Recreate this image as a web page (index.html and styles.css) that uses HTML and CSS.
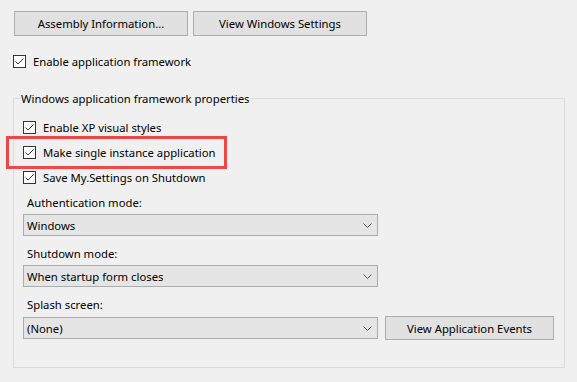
FILE: index.html
```html
<!DOCTYPE html>
<html lang="en">
<head>
  <meta charset="UTF-8">
  <title>Application settings</title>
  <link rel="stylesheet" href="styles.css">
</head>
<body>
  <div class="page">
    <div class="topButtons">
      <button class="winButton wide">Assembly Information...</button>
      <button class="winButton wide">View Windows Settings</button>
    </div>

    <label class="checkRow appFramework">
      <span class="box"><svg width="11" height="11" viewBox="0 0 11 11"><polyline points="1.5,5.5 4,8 9.5,2.5" fill="none" stroke="#333" stroke-width="1"/></svg></span>
      <span>Enable application framework</span>
    </label>

    <fieldset class="group">
      <legend>Windows application framework properties</legend>

      <div class="checkList">
        <label class="checkRow">
          <span class="box"><svg width="11" height="11" viewBox="0 0 11 11"><polyline points="1.5,5.5 4,8 9.5,2.5" fill="none" stroke="#333" stroke-width="1"/></svg></span>
          <span>Enable XP visual styles</span>
        </label>
        <label class="checkRow marked">
          <span class="box"><svg width="11" height="11" viewBox="0 0 11 11"><polyline points="1.5,5.5 4,8 9.5,2.5" fill="none" stroke="#333" stroke-width="1"/></svg></span>
          <span>Make single instance application</span>
        </label>
        <label class="checkRow">
          <span class="box"><svg width="11" height="11" viewBox="0 0 11 11"><polyline points="1.5,5.5 4,8 9.5,2.5" fill="none" stroke="#333" stroke-width="1"/></svg></span>
          <span>Save My.Settings on Shutdown</span>
        </label>
      </div>

      <div class="field">
        <div class="fieldLabel">Authentication mode:</div>
        <div class="combo">
          <span>Windows</span>
          <svg width="9" height="5" viewBox="0 0 9 5"><polyline points="0.5,0.5 4.5,4.5 8.5,0.5" fill="none" stroke="#555" stroke-width="1"/></svg>
        </div>
      </div>

      <div class="field">
        <div class="fieldLabel">Shutdown mode:</div>
        <div class="combo">
          <span>When startup form closes</span>
          <svg width="9" height="5" viewBox="0 0 9 5"><polyline points="0.5,0.5 4.5,4.5 8.5,0.5" fill="none" stroke="#555" stroke-width="1"/></svg>
        </div>
      </div>

      <div class="field">
        <div class="fieldLabel">Splash screen:</div>
        <div class="splashRow">
          <div class="combo">
            <span>(None)</span>
            <svg width="9" height="5" viewBox="0 0 9 5"><polyline points="0.5,0.5 4.5,4.5 8.5,0.5" fill="none" stroke="#555" stroke-width="1"/></svg>
          </div>
          <button class="winButton events">View Application Events</button>
        </div>
      </div>
    </fieldset>
  </div>
</body>
</html>
```

FILE: styles.css
```css
body {
  margin: 0;
  background: #f0f0f0;
  font-family: "Noto Sans", "Open Sans", sans-serif;
  font-size: 11.3px;
  color: #000;
}

.page {
  padding: 11px 0 0 13px;
}

/* top button row */
.topButtons {
  display: flex;
  gap: 5px;
  margin-left: 1px;
}

.winButton {
  height: 25px;
  background: #e1e1e1;
  border: 1px solid #adadad;
  font: inherit;
  color: #000;
  padding: 0;
}

.wide {
  width: 174px;
}

/* checkboxes */
.checkRow {
  display: flex;
  align-items: center;
  height: 17px;
  gap: 7px;
}

.box {
  width: 11px;
  height: 11px;
  border: 1px solid #333;
  background: #fff;
  display: flex;
}

.appFramework {
  margin-top: 17px;
}

/* group box */
.group {
  margin: 20px 0 0 0;
  width: 552px;
  box-sizing: border-box;
  border: 1px solid #dcdcdc;
  padding: 12px 9px 27px 9px;
}

.group legend {
  padding: 0 1px;
  margin-left: -3px;
  line-height: 17px;
}

.checkList {
  display: flex;
  flex-direction: column;
  gap: 8px;
  align-items: flex-start;
}

.marked {
  position: relative;
}

.marked::after {
  content: "";
  position: absolute;
  top: -8px;
  bottom: -8px;
  left: -17px;
  right: -12px;
  border: 3px solid #ef4646;
}

/* combo boxes */
.field {
  margin-top: 8px;
}

.field + .field {
  margin-top: 9px;
}

.fieldLabel {
  line-height: 17px;
  margin-left: 4px;
  margin-bottom: 3px;
}

.combo {
  width: 355px;
  height: 22px;
  box-sizing: border-box;
  background: #e5e5e5;
  border: 1px solid #acacac;
  display: flex;
  align-items: center;
  justify-content: space-between;
  padding: 0 5px 0 3px;
}

.splashRow {
  display: flex;
  align-items: center;
  gap: 7px;
}

.events {
  width: 169px;
  height: 24px;
}
```
